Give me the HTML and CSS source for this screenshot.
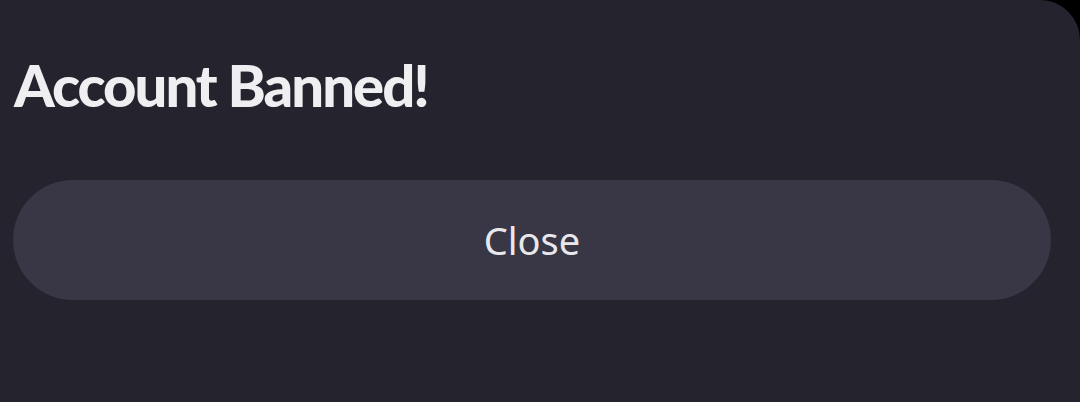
FILE: index.html
```html
<!DOCTYPE html>
<html>
<head>
  <meta charset="UTF-8">
  <title>Account Banned</title>
  <meta name="viewport" content="width=device-width, initial-scale=1.0">
  <link rel="stylesheet" href="styles.css">
</head>
<body>
  <div class="sheet">
    <h1 class="sheet-title">Account Banned!</h1>
    <button class="close-btn" type="button">Close</button>
  </div>
</body>
</html>
```

FILE: styles.css
```css
html, body { margin: 0; height: 100%; background: #000; }
body { font-family: "Noto Sans", sans-serif; overflow: hidden; }
.sheet {
  height: 100%; box-sizing: border-box;
  background: #25232e;
  border-top-right-radius: 40px;
  padding: 54px 29px 0 13px;
}
.sheet-title {
  margin: 0 0 0 1px;
  font-family: Lato, "Noto Sans", sans-serif;
  font-size: 58px; font-weight: 900;
  color: #efeff1; letter-spacing: -2px;
  line-height: 62px;
}
.close-btn {
  display: block; width: 100%;
  margin-top: 64px; height: 120px;
  border: none; border-radius: 60px;
  background: #393745; color: #e8e8ec;
  font-family: "Noto Sans", sans-serif;
  font-size: 38px; padding: 0;
  cursor: pointer;
}
```
